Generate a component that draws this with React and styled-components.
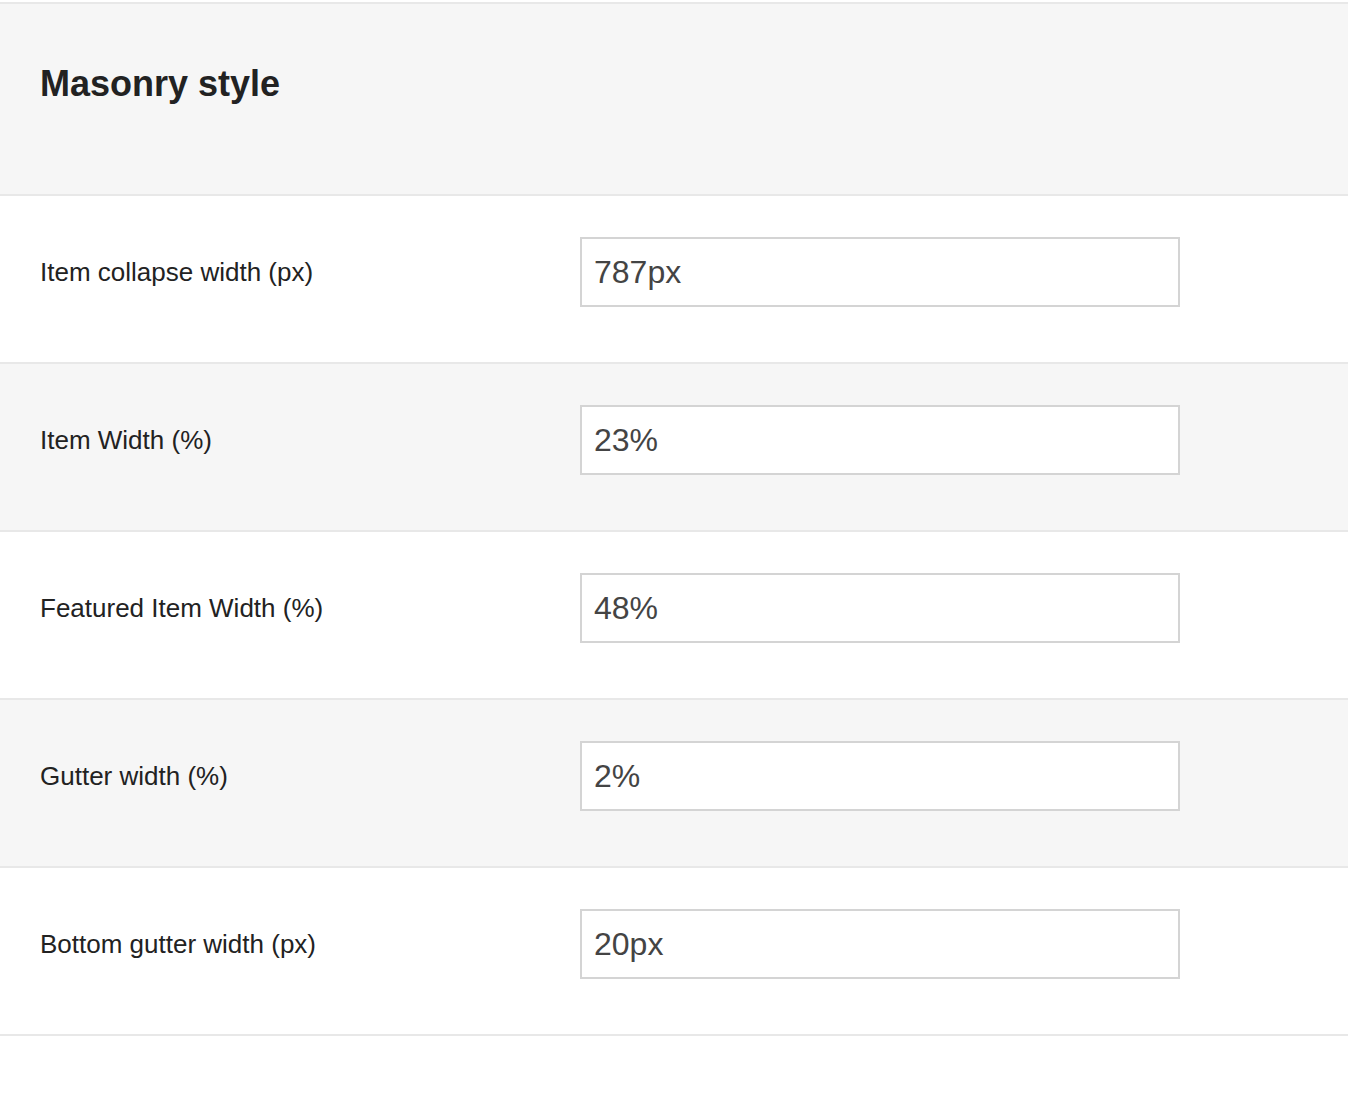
import React from "react";
import styled, { createGlobalStyle } from "styled-components";

const fields = [
  { label: "Item collapse width (px)", value: "787px" },
  { label: "Item Width (%)", value: "23%" },
  { label: "Featured Item Width (%)", value: "48%" },
  { label: "Gutter width (%)", value: "2%" },
  { label: "Bottom gutter width (px)", value: "20px" },
];

function App() {
  return (
    <>
      <GlobalStyle />
      <Panel>
        <Header>
          <Title>Masonry style</Title>
        </Header>
        {fields.map((f, i) => (
          <Row key={f.label} $shaded={i % 2 === 1}>
            <Label htmlFor={`field-${i}`}>{f.label}</Label>
            <Input id={`field-${i}`} type="text" defaultValue={f.value} />
          </Row>
        ))}
      </Panel>
    </>
  );
}

export default App;

// ============================== STYLES ==============================

const GlobalStyle = createGlobalStyle`
  body {
    margin: 0;
    background: #ffffff;
    font-family: "Liberation Sans", Arial, sans-serif;
  }
`;

const Panel = styled.div`
  padding-top: 2px;
`;

const Header = styled.div`
  height: 194px;
  display: flex;
  align-items: center;
  padding: 0 40px 30px;
  box-sizing: border-box;
  background-color: #f6f6f6;
  border-top: 2px solid #e8e8e8;
  border-bottom: 2px solid #e8e8e8;
`;

const Title = styled.h2`
  margin: 0;
  font-size: 36px;
  font-weight: 700;
  color: #222222;
`;

const Row = styled.div`
  display: flex;
  align-items: center;
  padding: 41px 40px 55px;
  background-color: ${(p) => (p.$shaded ? "#f6f6f6" : "#ffffff")};
  border-bottom: 2px solid #e8e8e8;
`;

const Label = styled.label`
  width: 540px;
  flex-shrink: 0;
  font-size: 26px;
  color: #222222;
`;

const Input = styled.input`
  width: 600px;
  height: 70px;
  box-sizing: border-box;
  padding: 0 12px;
  border: 2px solid #d4d4d4;
  border-radius: 0;
  background: #ffffff;
  font-family: "Liberation Sans", Arial, sans-serif;
  font-size: 32px;
  color: #444444;
  outline: none;
`;
